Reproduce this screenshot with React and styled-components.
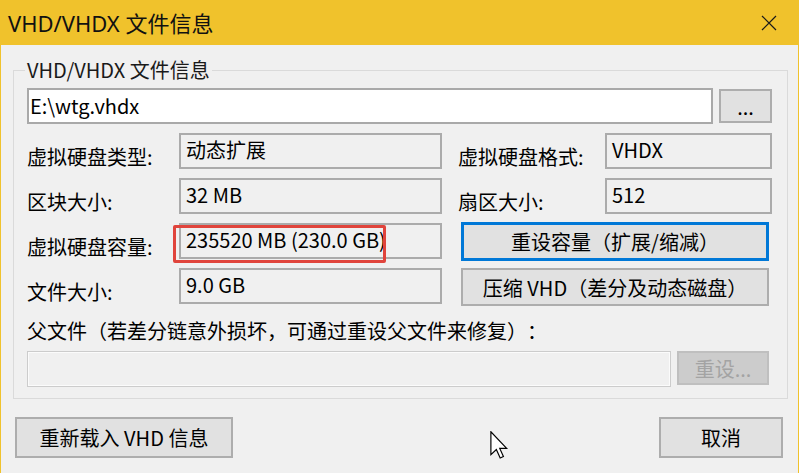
import styled, { createGlobalStyle } from 'styled-components'

const GlobalStyle = createGlobalStyle`
  html, body {
    margin: 0;
    padding: 0;
    background: #f0f0f0;
  }
  body {
    font-family: "Noto Sans CJK SC", sans-serif;
    color: #000;
    text-spacing-trim: space-all;
  }
`

const Window = styled.div`
  position: relative;
  width: 799px;
  height: 473px;
  box-sizing: border-box;
  border-left: 1px solid #f0c22c;
  border-right: 1px solid #f0c22c;
  background: #f0f0f0;
  display: flex;
  flex-direction: column;
  overflow: hidden;
`

const TitleBar = styled.div`
  height: 45px;
  flex-shrink: 0;
  background: #f0c22c;
  display: flex;
  align-items: center;
  justify-content: space-between;
  padding: 0 21px 0 7px;
`

const Title = styled.div`
  font-family: "Noto Sans", "Noto Sans CJK SC", sans-serif;
  font-size: 22px;
  line-height: 26px;
  color: #111;
`

const Body = styled.div`
  display: flex;
  flex-direction: column;
  padding: 13px 10px 0 12px;
`

const GroupBox = styled.fieldset`
  margin: 0;
  border: 1px solid #dadada;
  padding: 6px 15px 11px 13px;
  display: flex;
  flex-direction: column;
`

const Legend = styled.legend`
  font-size: 20px;
  line-height: 24px;
  padding: 0 2px;
  margin-left: -2px;
  color: #1a1a1a;
`

const PathRow = styled.div`
  display: flex;
  align-items: center;
  gap: 6px;
`

const PathInput = styled.div`
  flex: 1;
  height: 36px;
  box-sizing: border-box;
  background: #fff;
  border: 2px solid #a9a9a9;
  padding-left: 1px;
  font-size: 20px;
  line-height: 32px;
`

const Button = styled.div`
  box-sizing: border-box;
  display: flex;
  align-items: center;
  justify-content: center;
  height: ${(p) => p.$h || 38}px;
  width: ${(p) => (p.$w ? `${p.$w}px` : 'auto')};
  background: ${(p) => (p.$disabled ? '#cccccc' : '#e1e1e1')};
  border: ${(p) =>
    p.$focused ? '3px solid #0078d7' : p.$disabled ? '2px solid #bfbfbf' : '2px solid #adadad'};
  color: ${(p) => (p.$disabled ? '#a3a3a3' : '#000')};
  font-size: 20px;
  white-space: nowrap;
`

const InfoGrid = styled.div`
  margin-top: 9px;
  display: grid;
  grid-template-columns: 152px 263px 163px 167px;
  grid-auto-rows: 36px;
  row-gap: 9px;
`

const Label = styled.div`
  align-self: end;
  font-size: 20px;
  line-height: 24px;
  padding-left: ${(p) => (p.$indent ? 16 : 0)}px;
  white-space: nowrap;
`

const Field = styled.div`
  position: relative;
  box-sizing: border-box;
  height: 36px;
  border: 2px solid #ababab;
  background: #f0f0f0;
  padding-left: 5px;
  font-size: 20px;
  line-height: 30px;
  white-space: nowrap;
`

const Highlight = styled.div`
  position: absolute;
  left: -8px;
  top: 0;
  width: 213px;
  height: 38px;
  box-sizing: border-box;
  border: 3px solid #e0443c;
  border-radius: 2px;
`

const WideButton = styled(Button)`
  grid-column: 3 / span 2;
  margin: ${(p) => p.$margin};
`

const ParentLabel = styled.div`
  margin-top: 15px;
  font-size: 20px;
  line-height: 24px;
  white-space: nowrap;
`

const ParentRow = styled.div`
  margin-top: 8px;
  display: flex;
  align-items: flex-start;
  gap: 6px;
  padding-right: 3px;
`

const DisabledField = styled.div`
  flex: 1;
  height: 36px;
  box-sizing: border-box;
  border: 1px solid #cccccc;
  box-shadow: inset 0 0 0 1px #fbfbfb;
  background: #f0f0f0;
`

const Footer = styled.div`
  margin: 18px 5px 0 2px;
  display: flex;
  justify-content: space-between;
`

const Cursor = styled.svg`
  position: absolute;
  left: 488px;
  top: 431px;
`

const CloseIcon = () => (
  <svg width="16" height="16" viewBox="0 0 16 16">
    <path d="M1 1 L15 15 M15 1 L1 15" stroke="#1a1a1a" strokeWidth="1.2" fill="none" />
  </svg>
)

const App = () => {
  return (
    <>
      <GlobalStyle />
      <Window>
        <TitleBar>
          <Title>VHD/VHDX 文件信息</Title>
          <CloseIcon />
        </TitleBar>
        <Body>
          <GroupBox>
            <Legend>VHD/VHDX 文件信息</Legend>
            <PathRow>
              <PathInput>E:\wtg.vhdx</PathInput>
              <Button $w={53} $h={34}>...</Button>
            </PathRow>
            <InfoGrid>
              <Label>虚拟硬盘类型:</Label>
              <Field>动态扩展</Field>
              <Label $indent>虚拟硬盘格式:</Label>
              <Field>VHDX</Field>

              <Label>区块大小:</Label>
              <Field>32 MB</Field>
              <Label $indent>扇区大小:</Label>
              <Field>512</Field>

              <Label>虚拟硬盘容量:</Label>
              <Field>
                235520 MB (230.0 GB)
                <Highlight />
              </Field>
              <WideButton $focused $h={39} $margin="-1px 3px 0 19px">
                重设容量（扩展/缩减）
              </WideButton>

              <Label>文件大小:</Label>
              <Field>9.0 GB</Field>
              <WideButton $margin="0 3px 0 19px">压缩 VHD（差分及动态磁盘）</WideButton>
            </InfoGrid>
            <ParentLabel>父文件（若差分链意外损坏，可通过重设父文件来修复）：</ParentLabel>
            <ParentRow>
              <DisabledField />
              <Button $disabled $w={92} $h={34}>重设...</Button>
            </ParentRow>
          </GroupBox>
          <Footer>
            <Button $w={218} $h={41}>重新载入 VHD 信息</Button>
            <Button $w={124} $h={41}>取消</Button>
          </Footer>
        </Body>
        <Cursor width="20" height="28" viewBox="0 0 12 19">
          <path
            d="M0.5 0.5 L0.5 16 L4.2 12.6 L6.8 18.3 L9 17.3 L6.5 11.8 L11.2 11.8 Z"
            fill="#fff"
            stroke="#000"
            strokeWidth="0.8"
            strokeLinejoin="miter"
          />
        </Cursor>
      </Window>
    </>
  )
}

export default App
